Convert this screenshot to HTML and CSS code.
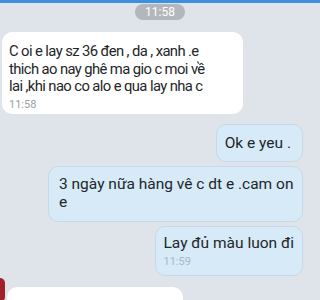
FILE: index.html
```html
<!DOCTYPE html>
<html lang="vi">
<head>
    <meta charset="UTF-8">
    <title>Chat</title>
    <link rel="stylesheet" href="styles.css">
</head>
<body>

<div class="topbar"></div>

<div class="chat">
    <div class="date-pill">11:58</div>

    <div class="msg in">
        <p>C oi e lay sz 36 đen , da , xanh .e<br>thich ao nay ghê ma gio c moi về<br>lai ,khi nao co alo e qua lay nha c</p>
        <span class="time">11:58</span>
    </div>

    <div class="msg out ok">
        <p>Ok e yeu .</p>
    </div>

    <div class="msg out wide">
        <p>3 ngày nữa hàng vê c dt e .cam on<br>e</p>
    </div>

    <div class="msg out">
        <p>Lay đủ màu luon đi</p>
        <span class="time">11:59</span>
    </div>

    <div class="row-in">
        <div class="avatar"></div>
        <div class="msg in last">
            <p>&nbsp;</p>
        </div>
    </div>
</div>

</body>
</html>
```

FILE: styles.css
```css
body {
    margin: 0;
    background-color: #dfe3ea;
    font-family: Roboto, "Noto Sans", sans-serif;
    color: #232629;
    overflow: hidden;
    height: 300px;
}
.topbar {
    height: 3px;
    background-color: #3d8fe0;
}
.chat {
    display: flex;
    flex-direction: column;
    padding: 0 17px 0 2px;
}
.date-pill {
    align-self: center;
    margin: 1px 0 12px 15px;
    padding: 0 10px;
    height: 16px;
    line-height: 16px;
    border-radius: 8px;
    background-color: #b3b7bd;
    color: #fff;
    font-size: 12px;
}
.msg {
    border-radius: 10px;
    padding: 8px 8px 7px 7px;
    box-sizing: border-box;
}
.msg p {
    margin: 0;
    font-size: 15.5px;
    line-height: 17.5px;
    white-space: nowrap;
}
.msg.in {
    align-self: flex-start;
    background-color: #fff;
    width: 241px;
    padding-top: 11px;
    padding-bottom: 3px;
}
.msg.in p {
    font-size: 14.8px;
    letter-spacing: -0.6px;
}
.msg.out {
    align-self: flex-end;
    background-color: #d7eaf8;
    border: 1px solid #c6d9e8;
    margin-top: 4px;
}
.msg.ok {
    margin-top: 10px;
    padding: 10px 11px 9px 8px;
}
.msg.wide {
    width: 255px;
    padding: 9px 10px 10px 10px;
}
.time {
    display: block;
    font-size: 11px;
    line-height: 13px;
    color: #9aa0a6;
    margin-top: 2px;
}
.msg.out .time {
    color: #a8b8c6;
}
.row-in {
    display: flex;
    align-items: flex-start;
    margin-top: 2px;
    margin-left: -2px;
}
.avatar {
    width: 5px;
    height: 24px;
    background-color: #a3202a;
    border-radius: 0 12px 12px 0;
}
.msg.last {
    width: 176px;
    height: 30px;
    margin-top: 9px;
    margin-left: 2px;
}
```
